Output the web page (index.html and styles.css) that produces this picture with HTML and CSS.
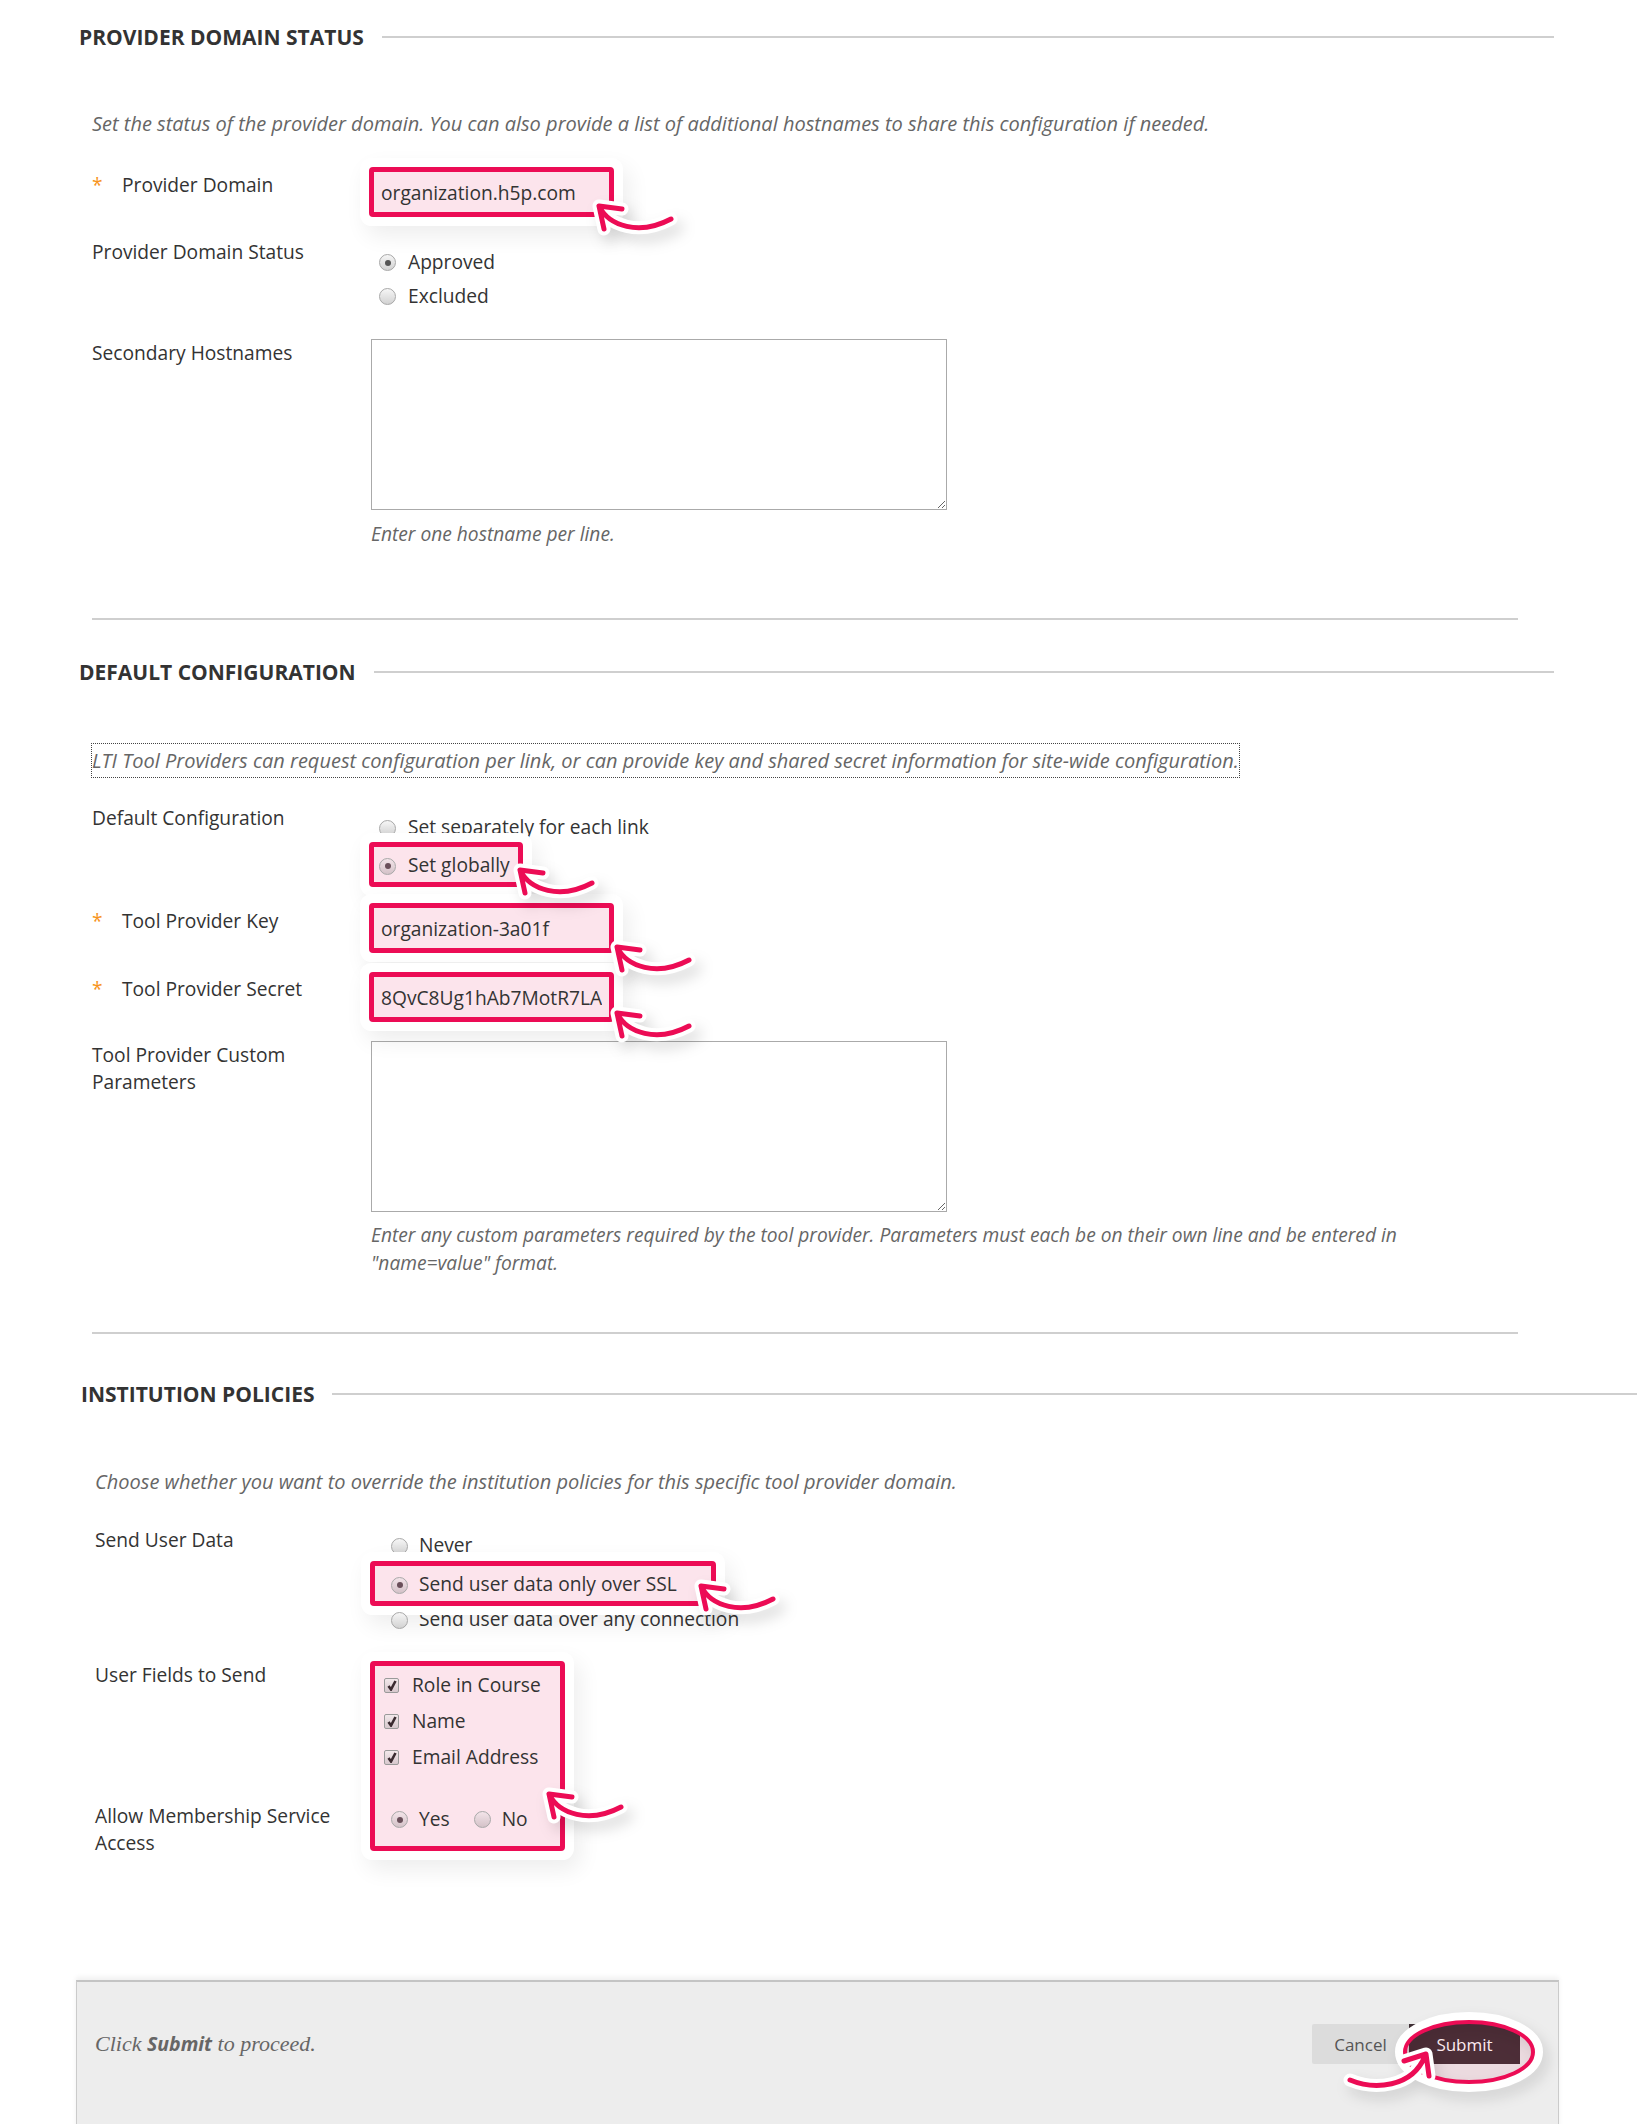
FILE: index.html
```html
<!DOCTYPE html>
<html lang="en">
  <head>
    <meta charset="UTF-8" />
    <meta name="viewport" content="width=device-width, initial-scale=1.0" />
    <title>Create Provider Domain</title>
    <link rel="stylesheet" href="styles.css">
  </head>
  <body>
    <div class="page">

      <!-- step 1 -->
      <section class="step">
        <h2 class="step-title">Provider Domain Status</h2>
        <div class="step-body">
          <p class="step-intro">Set the status of the provider domain. You can also provide a list of additional hostnames to share this configuration if needed.</p>

          <div class="field-row row-domain">
            <label class="field-label"><span class="req">*</span>Provider Domain</label>
            <div class="field">
              <span class="mark-wrap">
                <input class="text-input" type="text" value="organization.h5p.com">
                <svg class="arrow arrow-domain" width="100" height="50" viewBox="0 0 100 50"><path class="halo" d="M12,12 C22,32 52,42 84,25 M35,15 L12,12 L17,35"/><path class="ink" d="M12,12 C22,32 52,42 84,25 M35,15 L12,12 L17,35"/></svg>
              </span>
            </div>
          </div>

          <div class="field-row row-status">
            <div class="field-label">Provider Domain Status</div>
            <div class="field choices">
              <div class="choice"><span class="radio on"></span>Approved</div>
              <div class="choice"><span class="radio"></span>Excluded</div>
            </div>
          </div>

          <div class="field-row row-hosts">
            <label class="field-label">Secondary Hostnames</label>
            <div class="field">
              <textarea class="text-area"></textarea>
              <p class="field-help">Enter one hostname per line.</p>
            </div>
          </div>

          <div class="step-rule"></div>
        </div>
      </section>

      <!-- step 2 -->
      <section class="step step-2">
        <h2 class="step-title">Default Configuration</h2>
        <div class="step-body">
          <p class="step-note">LTI Tool Providers can request configuration per link, or can provide key and shared secret information for site-wide configuration.</p>

          <div class="field-row row-config">
            <div class="field-label">Default Configuration</div>
            <div class="field choices choices-config">
              <div class="choice"><span class="radio"></span>Set separately for each link</div>
              <div class="choice marked mark-global">
                <span class="radio on"></span>Set globally
                <svg class="arrow arrow-global" width="100" height="50" viewBox="0 0 100 50"><path class="halo" d="M12,12 C22,32 52,42 84,25 M35,15 L12,12 L17,35"/><path class="ink" d="M12,12 C22,32 52,42 84,25 M35,15 L12,12 L17,35"/></svg>
              </div>
            </div>
          </div>

          <div class="field-row row-key">
            <label class="field-label"><span class="req">*</span>Tool Provider Key</label>
            <div class="field">
              <span class="mark-wrap">
                <input class="text-input" type="text" value="organization-3a01f">
                <svg class="arrow arrow-key" width="100" height="50" viewBox="0 0 100 50"><path class="halo" d="M12,12 C22,32 52,42 84,25 M35,15 L12,12 L17,35"/><path class="ink" d="M12,12 C22,32 52,42 84,25 M35,15 L12,12 L17,35"/></svg>
              </span>
            </div>
          </div>

          <div class="field-row row-secret">
            <label class="field-label"><span class="req">*</span>Tool Provider Secret</label>
            <div class="field">
              <span class="mark-wrap">
                <input class="text-input" type="text" value="8QvC8Ug1hAb7MotR7LAIx2">
                <svg class="arrow arrow-secret" width="100" height="50" viewBox="0 0 100 50"><path class="halo" d="M12,12 C22,32 52,42 84,25 M35,15 L12,12 L17,35"/><path class="ink" d="M12,12 C22,32 52,42 84,25 M35,15 L12,12 L17,35"/></svg>
              </span>
            </div>
          </div>

          <div class="field-row row-custom">
            <label class="field-label">Tool Provider Custom Parameters</label>
            <div class="field">
              <textarea class="text-area"></textarea>
              <p class="field-help help-wide">Enter any custom parameters required by the tool provider. Parameters must each be on their own line and be entered in "name=value" format.</p>
            </div>
          </div>

          <div class="step-rule rule-2"></div>
        </div>
      </section>

      <!-- step 3 -->
      <section class="step step-3">
        <h2 class="step-title">Institution Policies</h2>
        <div class="step-body">
          <p class="step-intro">Choose whether you want to override the institution policies for this specific tool provider domain.</p>

          <div class="field-row row-send">
            <div class="field-label">Send User Data</div>
            <div class="field choices choices-send">
              <div class="choice"><span class="radio"></span>Never</div>
              <div class="choice marked mark-ssl">
                <span class="radio on"></span>Send user data only over SSL
                <svg class="arrow arrow-ssl" width="100" height="50" viewBox="0 0 100 50"><path class="halo" d="M12,12 C22,32 52,42 84,25 M35,15 L12,12 L17,35"/><path class="ink" d="M12,12 C22,32 52,42 84,25 M35,15 L12,12 L17,35"/></svg>
              </div>
              <div class="choice"><span class="radio"></span>Send user data over any connection</div>
            </div>
          </div>

          <div class="field-row row-fields">
            <div class="field-labels">
              <div class="field-label">User Fields to Send</div>
              <div class="field-label label-membership">Allow Membership Service Access</div>
            </div>
            <div class="field">
              <div class="marked mark-fields">
                <div class="check-item"><span class="checkbox"><svg width="10" height="11" viewBox="0 0 10 11"><path d="M1.5,6 L4,9.5 L8.5,1"/></svg></span>Role in Course</div>
                <div class="check-item"><span class="checkbox"><svg width="10" height="11" viewBox="0 0 10 11"><path d="M1.5,6 L4,9.5 L8.5,1"/></svg></span>Name</div>
                <div class="check-item"><span class="checkbox"><svg width="10" height="11" viewBox="0 0 10 11"><path d="M1.5,6 L4,9.5 L8.5,1"/></svg></span>Email Address</div>
                <div class="inline-choices">
                  <span class="choice"><span class="radio on"></span>Yes</span>
                  <span class="choice"><span class="radio"></span>No</span>
                </div>
                <svg class="arrow arrow-member" width="100" height="50" viewBox="0 0 100 50"><path class="halo" d="M12,12 C22,32 52,42 84,25 M35,15 L12,12 L17,35"/><path class="ink" d="M12,12 C22,32 52,42 84,25 M35,15 L12,12 L17,35"/></svg>
              </div>
            </div>
          </div>
        </div>
      </section>

      <div class="form-submit">
        <p class="submit-hint">Click <strong>Submit</strong> to proceed.</p>
        <div class="submit-buttons">
          <button class="btn btn-cancel" type="button">Cancel</button>
          <button class="btn btn-submit" type="button">Submit</button>
          <svg class="submit-mark" width="210" height="70" viewBox="0 0 210 70">
            <ellipse class="ring-halo" cx="157" cy="28" rx="69" ry="35"/>
            <ellipse class="ring-ink" cx="157" cy="28" rx="64" ry="30"/>
            <path class="halo" d="M38,56 C62,66 100,64 113,32 M92,37 L114,30 L117,52"/>
            <path class="ink" d="M38,56 C62,66 100,64 113,32 M92,37 L114,30 L117,52"/>
          </svg>
        </div>
      </div>

    </div>
  </body>
</html>
```

FILE: styles.css
```css
body {
  margin: 0;
  font-family: "Open Sans", Arial, sans-serif;
  font-size: 19.2px;
  line-height: 27px;
  color: #333;
  background: #fff;
}
.page {
  padding-top: 24px;
  height: 2100px;
  overflow: hidden;
}
p {
  margin: 0;
}

/* steps */
.step {
  margin-left: 79px;
  width: 1475px;
}
.step-3 {
  margin-left: 81px;
  width: 1556px;
}
.step-title {
  display: flex;
  align-items: center;
  gap: 18px;
  margin: 0;
  height: 26px;
  font-size: 21px;
  font-weight: 700;
  text-transform: uppercase;
  color: #333;
}
.step-title::after {
  content: "";
  flex: 1;
  height: 2px;
  background: #cfcfcf;
}
.step-2 .step-title {
  margin-top: 39px;
}
.step-3 .step-title {
  margin-top: 47px;
}
.step-body {
  padding-left: 13px;
}
.step-3 .step-body {
  padding-left: 14px;
}
.step-intro {
  margin-top: 60px;
  font-size: 20px;
  font-style: italic;
  color: #666;
}
.step-3 .step-intro {
  margin-top: 61px;
}
.step-note {
  margin: 58px 0 0 -1px;
  width: fit-content;
  border: 1px dotted #444;
  line-height: 33px;
  font-size: 20px;
  font-style: italic;
  color: #666;
}
.step-rule {
  width: 1426px;
  height: 2px;
  margin-top: 71px;
  background: #cfcfcf;
}
.rule-2 {
  margin-top: 55px;
}

/* rows */
.field-row {
  display: grid;
  grid-template-columns: 277px 1fr;
  align-items: start;
}
.step-3 .field-row {
  grid-template-columns: 274px 1fr;
}
.field-label {
  display: block;
}
.req {
  display: inline-block;
  width: 30px;
  color: #f7941d;
}
.row-domain {
  margin-top: 30px;
}
.row-domain .field-label,
.row-key .field-label {
  padding-top: 4px;
}
.row-status {
  margin-top: 21px;
}
.row-hosts {
  margin-top: 27px;
}
.row-config {
  margin-top: 26px;
}
.row-key {
  margin-top: 24px;
}
.row-secret {
  margin-top: 19px;
}
.row-secret .field-label {
  padding-top: 3px;
}
.row-custom {
  margin-top: 19px;
}
.row-send {
  margin-top: 31px;
}
.row-fields {
  margin-top: 24px;
}
.label-membership {
  margin-top: 114px;
}

/* inputs */
.mark-wrap {
  position: relative;
  display: inline-block;
}
.text-input {
  display: block;
  box-sizing: border-box;
  width: 245px;
  height: 50px;
  padding: 0 7px;
  border: 5px solid #ec0c55;
  border-radius: 4px;
  background: #fce4ec;
  font-family: "Open Sans", Arial, sans-serif;
  font-size: 19.2px;
  color: #333;
  box-shadow: 0 0 0 9px #fff, 6px 10px 22px 9px rgba(0, 0, 0, 0.07);
}
.text-area {
  display: block;
  box-sizing: border-box;
  width: 576px;
  height: 171px;
  margin-left: 2px;
  border: 1px solid #aaa;
  background: #fff;
}
.field-help {
  margin: 10px 0 0 2px;
  font-style: italic;
  color: #666;
}
.help-wide {
  max-width: 1070px;
  margin-top: 9px;
  line-height: 28px;
}

/* radios and checkboxes */
.choices {
  padding: 6px 0 0 10px;
}
.choices-config {
  padding-top: 5px;
}
.choices-send {
  padding: 0 0 0 22px;
}
.choice {
  display: flex;
  align-items: center;
  gap: 12px;
  height: 34px;
}
.choices-config .choice {
  height: 35px;
}
.choices-send .choice {
  height: 37px;
  gap: 11px;
}
.radio {
  flex: none;
  box-sizing: border-box;
  width: 17px;
  height: 17px;
  margin-top: 3px;
  border: 1px solid #a8a8a8;
  border-radius: 50%;
  background: linear-gradient(#f6f6f6, #d2d2d2);
  position: relative;
}
.radio.on::after {
  content: "";
  position: absolute;
  left: 4.5px;
  top: 4.5px;
  width: 6px;
  height: 6px;
  border-radius: 50%;
  background: #555;
}
.marked .radio {
  background: linear-gradient(#f3e4e9, #d4c2c8);
}
.marked .radio.on::after {
  background: #6a4f5a;
}
.checkbox {
  flex: none;
  box-sizing: border-box;
  width: 15px;
  height: 15px;
  margin-top: 2px;
  border: 1px solid #9a9a9a;
  border-radius: 2px;
  background: linear-gradient(#f3e8eb, #d7c8cd);
  display: flex;
  align-items: center;
  justify-content: center;
}
.checkbox path {
  fill: none;
  stroke: #3a2a30;
  stroke-width: 2.6;
}

/* annotation marks */
.marked {
  position: relative;
  box-sizing: border-box;
  border: 5px solid #ec0c55;
  border-radius: 4px;
  background: #fce4ec;
  box-shadow: 0 0 0 9px #fff, 6px 10px 22px 9px rgba(0, 0, 0, 0.07);
}
.choices .mark-global {
  width: 154px;
  height: 45px;
  margin: -2px 0 -8px -10px;
  padding-left: 5px;
}
.choices .mark-ssl {
  width: 346px;
  height: 45px;
  margin: -2px 0 -6px -21px;
  padding-left: 16px;
}
.mark-fields {
  width: 195px;
  margin-left: 1px;
  padding: 0 0 10px 9px;
}
.check-item {
  display: flex;
  align-items: center;
  gap: 13px;
  height: 36px;
}
.inline-choices {
  display: flex;
  gap: 24px;
  margin-top: 26px;
  padding-left: 7px;
  height: 36px;
}
.inline-choices .choice {
  height: 36px;
  gap: 11px;
}
.arrow {
  position: absolute;
  z-index: 2;
  overflow: visible;
  filter: drop-shadow(6px 8px 7px rgba(0, 0, 0, 0.13));
}
.arrow path,
.submit-mark path {
  fill: none;
  stroke-linecap: round;
  stroke-linejoin: round;
}
.halo {
  stroke: #fff;
  stroke-width: 13;
}
.ink {
  stroke: #ec0c55;
  stroke-width: 5;
}
.arrow-domain {
  left: 218px;
  top: 27px;
}
.arrow-global {
  left: 134px;
  top: 11px;
}
.arrow-key {
  left: 236px;
  top: 32px;
}
.arrow-secret {
  left: 236px;
  top: 29px;
}
.arrow-ssl {
  left: 314px;
  top: 8px;
}
.arrow-member {
  left: 162px;
  top: 116px;
}

/* submit bar */
.form-submit {
  box-sizing: border-box;
  width: 1483px;
  height: 160px;
  margin: 124px 0 0 76px;
  padding: 42px 38px 0 18px;
  display: flex;
  justify-content: space-between;
  align-items: flex-start;
  background: #ededed;
  border: 1px solid #cbcbcb;
  border-top: 2px solid #c4c4c4;
  border-bottom: 0;
  box-shadow: 0 -3px 5px rgba(0, 0, 0, 0.06);
}
.submit-hint {
  line-height: 40px;
  font-family: "Liberation Serif", "Times New Roman", serif;
  font-style: italic;
  font-size: 22px;
  color: #666;
}
.submit-hint strong {
  font-family: "Open Sans", Arial, sans-serif;
  font-size: 19.5px;
  font-weight: 700;
}
.submit-buttons {
  position: relative;
  display: flex;
}
.btn {
  height: 40px;
  border: 0;
  font-family: "Open Sans", Arial, sans-serif;
  font-size: 17px;
}
.btn-cancel {
  width: 97px;
  background: #dcdcdc;
  color: #555;
  border-radius: 2px 0 0 2px;
}
.btn-submit {
  width: 111px;
  background: #3f3035;
  color: #fff;
}
.submit-mark {
  position: absolute;
  left: 0;
  top: 0;
  overflow: visible;
  filter: drop-shadow(5px 7px 7px rgba(0, 0, 0, 0.12));
}
.ring-halo {
  fill: none;
  stroke: #fff;
  stroke-width: 10;
}
.ring-ink {
  fill: rgba(240, 20, 90, 0.08);
  stroke: #ec0c55;
  stroke-width: 4;
}
```
